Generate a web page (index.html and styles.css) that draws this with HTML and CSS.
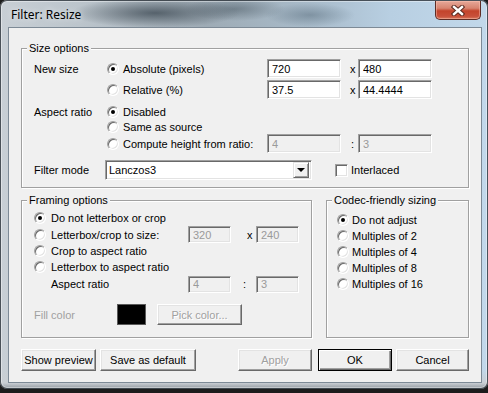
FILE: index.html
```html
<!DOCTYPE html>
<html lang="en">
  <head>
    <meta charset="UTF-8" />
    <title>Filter: Resize</title>
    <link rel="stylesheet" href="styles.css">
  </head>
  <body>
    <div class="window">
      <div class="titlebar">
        <span class="title">Filter: Resize</span>
        <button class="close" aria-label="Close">
          <svg width="14" height="11" viewBox="0 0 14 11">
            <path d="M3 2 L11 9 M11 2 L3 9" stroke="#5a2a20" stroke-width="4.4" stroke-linecap="square" fill="none" />
            <path d="M3 2 L11 9 M11 2 L3 9" stroke="#fff" stroke-width="2.4" stroke-linecap="square" fill="none" />
          </svg>
        </button>
      </div>

      <div class="client">
        <div class="group size-group">
          <span class="group-title">Size options</span>
          <div class="row r-edit">
            <span class="lbl">New size</span>
            <label class="opt"><span class="radio on"></span>Absolute (pixels)</label>
            <input class="edit" value="720" />
            <span class="sep">x</span>
            <input class="edit" value="480" />
          </div>
          <div class="row r-edit">
            <span class="lbl"></span>
            <label class="opt"><span class="radio"></span>Relative (%)</label>
            <input class="edit" value="37.5" />
            <span class="sep">x</span>
            <input class="edit" value="44.4444" />
          </div>
          <div class="row r-aspect">
            <span class="lbl">Aspect ratio</span>
            <label class="opt"><span class="radio on"></span>Disabled</label>
          </div>
          <div class="row r-same">
            <span class="lbl"></span>
            <label class="opt"><span class="radio"></span>Same as source</label>
          </div>
          <div class="row r-edit2">
            <span class="lbl"></span>
            <label class="opt"><span class="radio"></span>Compute height from ratio:</label>
            <input class="edit" value="4" disabled />
            <span class="sep colon">:</span>
            <input class="edit" value="3" disabled />
          </div>
          <div class="row r-filter">
            <span class="lbl short">Filter mode</span>
            <div class="combo">
              <span class="combo-text">Lanczos3</span>
              <span class="combo-btn"></span>
            </div>
            <label class="check"><span class="checkbox"></span>Interlaced</label>
          </div>
        </div>

        <div class="lower">
          <div class="group framing">
            <span class="group-title">Framing options</span>
            <div class="row fr first">
              <label class="fopt"><span class="radio on"></span>Do not letterbox or crop</label>
            </div>
            <div class="row fr tall">
              <label class="fopt"><span class="radio"></span>Letterbox/crop to size:</label>
              <input class="edit small" value="320" disabled />
              <span class="sep wide">x</span>
              <input class="edit small" value="240" disabled />
            </div>
            <div class="row fr">
              <label class="fopt"><span class="radio"></span>Crop to aspect ratio</label>
            </div>
            <div class="row fr">
              <label class="fopt"><span class="radio"></span>Letterbox to aspect ratio</label>
            </div>
            <div class="row fr ratio">
              <span class="fopt indent">Aspect ratio</span>
              <input class="edit small" value="4" disabled />
              <span class="sep wide colon">:</span>
              <input class="edit small" value="3" disabled />
            </div>
            <div class="row fill">
              <span class="fill-lbl">Fill color</span>
              <span class="swatch"></span>
              <button class="btn pick" disabled>Pick color...</button>
            </div>
          </div>

          <div class="group codec">
            <span class="group-title">Codec-friendly sizing</span>
            <div class="row cr first"><label class="copt"><span class="radio on"></span>Do not adjust</label></div>
            <div class="row cr"><label class="copt"><span class="radio"></span>Multiples of 2</label></div>
            <div class="row cr"><label class="copt"><span class="radio"></span>Multiples of 4</label></div>
            <div class="row cr"><label class="copt"><span class="radio"></span>Multiples of 8</label></div>
            <div class="row cr"><label class="copt"><span class="radio"></span>Multiples of 16</label></div>
          </div>
        </div>

        <div class="buttons">
          <button class="btn b-preview">Show preview</button>
          <button class="btn b-save">Save as default</button>
          <button class="btn b-apply" disabled>Apply</button>
          <button class="btn b-ok default">OK</button>
          <button class="btn b-cancel">Cancel</button>
        </div>
      </div>
    </div>
  </body>
</html>
```

FILE: styles.css
```css
* {
  box-sizing: border-box;
  margin: 0;
  padding: 0;
}

body {
  width: 488px;
  height: 393px;
  overflow: hidden;
  background: #1c1c1c;
  font-family: "Liberation Sans", Arial, sans-serif;
  font-size: 11px;
  color: #000;
}

/* aero frame */
.window {
  width: 488px;
  height: 389px;
  padding: 0 6px 6px 8px;
  display: flex;
  flex-direction: column;
  border-radius: 7px;
  background:
    radial-gradient(85px 15px at 155px 13px, rgba(58, 70, 80, 0.75), transparent),
    radial-gradient(50px 12px at 235px 9px, rgba(70, 85, 96, 0.5), transparent),
    radial-gradient(45px 12px at 310px 15px, rgba(78, 98, 114, 0.45), transparent),
    linear-gradient(to bottom, transparent 370px, #c9ced3 383px, #8d959c 389px),
    linear-gradient(to right, #c8cfd5 0, #bcc5cc 16%, #9eabb5 42%, #a8bbca 64%, #b8cfe2 80%, #c2d8ea 100%);
  box-shadow: inset 0 0 0 1px rgba(24, 32, 40, 0.75), inset 0 0 0 2px rgba(255, 255, 255, 0.4);
}

.titlebar {
  height: 27px;
  display: flex;
  align-items: flex-start;
  justify-content: space-between;
}

.title {
  padding: 7px 0 0 3px;
  font-family: "Noto Sans", sans-serif;
  font-size: 12px;
  line-height: 16px;
  color: #000;
  text-shadow: 0 0 6px rgba(255, 255, 255, 0.8);
}

.close {
  width: 46px;
  height: 19px;
  margin: 1px 1px 0 0;
  display: flex;
  align-items: center;
  justify-content: center;
  border: 1px solid #5e2d25;
  border-top: none;
  border-radius: 0 0 5px 5px;
  background: linear-gradient(to bottom, #e6a899 0%, #d78470 40%, #c3442b 55%, #c8503a 85%, #d77a5e 100%);
  box-shadow: inset 0 0 0 1px rgba(255, 200, 185, 0.45);
}

.client {
  flex: 1;
  display: flex;
  flex-direction: column;
  padding: 0 12px 11px;
  background: #f0f0f0;
  border: 1px solid #7d8a96;
}

/* group boxes */
.group {
  display: flex;
  flex-direction: column;
  border: 1px solid #a0a0a0;
  box-shadow: 1px 1px 0 #fff, inset 1px 1px 0 #fff;
}

.group-title {
  align-self: flex-start;
  margin: -7px 0 0 -7px;
  padding: 0 2px;
  line-height: 13px;
  background: #f0f0f0;
}

.row {
  display: flex;
  align-items: center;
}

.size-group {
  margin-top: 20px;
  padding: 0 11px 7px 12px;
}

.size-group .r-edit {
  height: 21px;
}

.size-group .r-edit:nth-of-type(1) {
  margin-top: 3px;
}

.r-aspect {
  height: 16px;
  margin-top: 4px;
}

.r-same {
  height: 14px;
}

.r-edit2 {
  height: 19px;
}

.r-filter {
  height: 20px;
  margin-top: 7px;
}

.lbl {
  width: 73px;
  flex-shrink: 0;
}

.lbl.short {
  width: 71px;
}

.opt,
.fopt,
.copt {
  display: flex;
  align-items: center;
  flex-shrink: 0;
}

.opt {
  width: 160px;
}

.fopt {
  width: 154px;
}

.fopt.indent {
  padding-left: 17px;
}

.radio {
  width: 12px;
  height: 12px;
  margin-right: 4px;
  display: grid;
  place-items: center;
  flex-shrink: 0;
  border-radius: 50%;
  background: #fff;
  border: 1px solid;
  border-color: #a0a0a0 #fff #fff #a0a0a0;
  box-shadow: inset 1px 1px 0 #696969, inset -1px -1px 0 #e3e3e3;
}

.fopt .radio {
  margin-right: 5px;
}

.copt .radio {
  margin-right: 3px;
}

.radio.on::after {
  content: "";
  width: 4px;
  height: 4px;
  border-radius: 50%;
  background: #000;
}

.edit {
  width: 74px;
  height: 19px;
  padding: 0 4px;
  font: inherit;
  color: #000;
  background: #fff;
  border: 1px solid;
  border-color: #a0a0a0 #fff #fff #a0a0a0;
  box-shadow: inset 1px 1px 0 #696969, inset -1px -1px 0 #e3e3e3;
  outline: none;
}

.edit:disabled {
  color: #9a9a9a;
  background: #f0f0f0;
}

.edit.small {
  width: 43px;
  height: 17px;
}

.sep {
  width: 17px;
  flex-shrink: 0;
  padding-left: 9px;
}

.sep.colon {
  padding-left: 10px;
}

.sep.wide {
  width: 25px;
  padding-left: 16px;
}

.sep.wide.colon {
  padding-left: 12px;
}

/* combo box */
.combo {
  width: 207px;
  height: 20px;
  display: flex;
  align-items: center;
  padding: 2px;
  background: #fff;
  border: 1px solid;
  border-color: #a0a0a0 #fff #fff #a0a0a0;
  box-shadow: inset 1px 1px 0 #696969, inset -1px -1px 0 #e3e3e3;
}

.combo-text {
  flex: 1;
  padding-left: 1px;
}

.combo-btn {
  width: 16px;
  height: 16px;
  display: grid;
  place-items: center;
  background: #f0f0f0;
  border: 1px solid;
  border-color: #e3e3e3 #696969 #696969 #e3e3e3;
  box-shadow: inset 1px 1px 0 #fff, inset -1px -1px 0 #a0a0a0;
}

.combo-btn::after {
  content: "";
  border-left: 4px solid transparent;
  border-right: 4px solid transparent;
  border-top: 4px solid #000;
}

.check {
  display: flex;
  align-items: center;
  margin-left: 23px;
}

.checkbox {
  width: 13px;
  height: 13px;
  margin-right: 3px;
  background: #fff;
  border: 1px solid;
  border-color: #a0a0a0 #fff #fff #a0a0a0;
  box-shadow: inset 1px 1px 0 #696969, inset -1px -1px 0 #e3e3e3;
}

/* lower groups */
.lower {
  display: flex;
  gap: 14px;
  margin-top: 12px;
}

.framing {
  width: 291px;
  padding: 0 0 12px 12px;
}

.fr {
  height: 16px;
}

.fr.first {
  margin-top: 3px;
}

.fr.tall {
  height: 17px;
}

.fr.ratio {
  height: 18px;
}

.fill {
  height: 21px;
  margin-top: 11px;
}

.fill-lbl {
  width: 83px;
  color: #a0a0a0;
}

.swatch {
  width: 29px;
  height: 21px;
  background: #000;
  border: 1px solid #5a5a5a;
}

.codec {
  flex: 1;
  padding: 0 0 0 10px;
}

.codec .group-title {
  margin-left: -5px;
}

.cr {
  height: 16px;
}

.cr.first {
  margin-top: 5px;
}

/* buttons */
.btn {
  height: 22px;
  font: inherit;
  color: #000;
  background: #f0f0f0;
  border: 1px solid;
  border-color: #fff #696969 #696969 #fff;
  box-shadow: inset -1px -1px 0 #a0a0a0, inset 1px 1px 0 #e3e3e3;
}

.btn:disabled {
  color: #a0a0a0;
  text-shadow: 1px 1px 0 #fff;
}

.btn.default {
  border-color: #000;
  box-shadow: inset 1px 1px 0 #fff, inset -1px -1px 0 #696969, inset -2px -2px 0 #a0a0a0;
}

.btn.pick {
  width: 85px;
  height: 21px;
  margin-left: 11px;
}

.buttons {
  display: flex;
  margin-top: 11px;
}

.b-preview {
  width: 75px;
}

.b-save {
  width: 96px;
  margin-left: 4px;
}

.b-apply {
  width: 74px;
  margin-left: auto;
}

.b-ok {
  width: 74px;
  margin-left: 6px;
}

.b-cancel {
  width: 73px;
  margin-left: 4px;
}
```
